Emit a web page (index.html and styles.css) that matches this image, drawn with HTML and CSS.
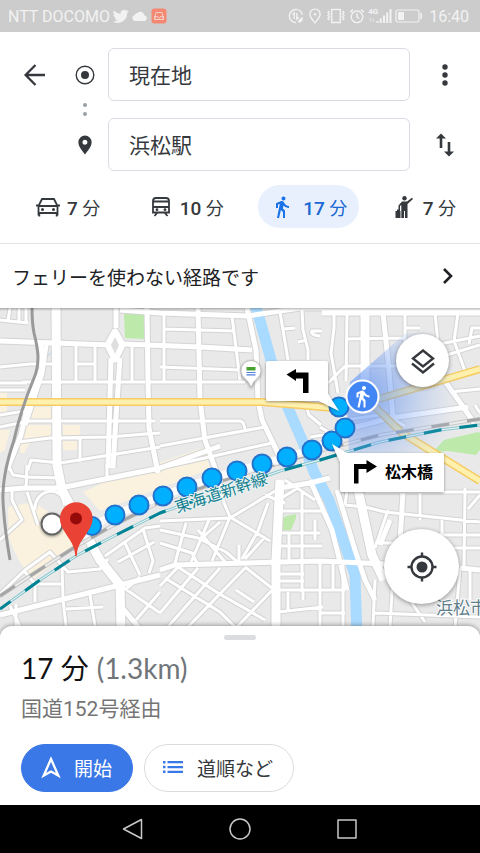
FILE: index.html
```html
<!DOCTYPE html>
<html lang="ja">
<head>
<meta charset="utf-8">
<meta name="viewport" content="width=device-width, initial-scale=1">
<title>浜松駅までの経路</title>
<link rel="stylesheet" href="styles.css">
</head>
<body>
<div class="app">
  <div class="status">
    <span class="carrier">NTT DOCOMO</span>
    <svg width="16" height="16" viewBox="0 0 24 24" fill="currentColor"><path d="M23.6 4.9c-.9.4-1.800.6-2.800.8 1-.6 1.800-1.600 2.100-2.700-.9.6-2 1-3.100 1.200a4.900 4.900 0 0 0-8.300 4.500C7.400 8.500 3.800 6.500 1.400 3.600a4.900 4.900 0 0 0 1.500 6.500c-.8 0-1.600-.2-2.200-.6v.1c0 2.400 1.700 4.400 3.900 4.800-.7.2-1.500.2-2.200.1.600 2 2.400 3.400 4.600 3.400A9.900 9.900 0 0 1-.3 20 13.900 13.900 0 0 0 21.200 7.600c1-.7 1.800-1.600 2.400-2.700z"/></svg>
    <svg width="16" height="16" viewBox="0 0 16 16" fill="currentColor"><path d="M3.500 13a3 3 0 0 1-.8-5.900 2.300 2.300 0 0 1 2.300-1.800 4 4 0 0 1 7.200 1.900A3 3 0 0 1 12.800 13z"/></svg>
    <svg width="16" height="16" viewBox="0 0 16 16"><rect x=".5" y=".5" width="15" height="15" rx="3" fill="#f58872"/><path d="M4 8.500 5 4.500h6l1 4v3H4zM4 8.500h2.500q0 1.500 1.500 1.500t1.500-1.500H12M3.500 8v3.500h9V8" fill="none" stroke="#f3cfc7"/></svg>
    <span class="spacer"></span>
    <svg width="16" height="16" viewBox="0 0 16 16" fill="none" stroke="currentColor" stroke-width="1.400"><path d="M14.500 7A6.600 6.600 0 1 0 8 14.600M6.200 11V5L4.600 6.600M8.800 5v6l1.800-1.800"/><path d="M10 14.500q0-4 5-5.500 0 6-5 5.500z" fill="currentColor" stroke="none"/></svg>
    <svg width="16" height="16" viewBox="0 0 16 16" fill="none" stroke="currentColor" stroke-width="1.400"><path d="M8 14.800C5.500 11.500 2.900 9 2.900 6.200a5.100 5.100 0 0 1 10.200 0C13.100 9 10.500 11.500 8 14.800z"/><circle cx="8" cy="6.300" r="1.200" fill="currentColor" stroke="none"/></svg>
    <svg width="20" height="16" viewBox="0 0 20 16" fill="none" stroke="currentColor" stroke-width="1.400"><rect x="5.700" y="1.500" width="8.600" height="13"/><path d="M3.500 3 2 4.500 3.500 6 2 7.500 3.500 9 2 10.500 3.500 12M16.500 3 18 4.500 16.500 6 18 7.500 16.500 9 18 10.500 16.500 12"/></svg>
    <svg width="16" height="16" viewBox="0 0 16 16" fill="none" stroke="currentColor" stroke-width="1.400"><circle cx="8" cy="8.800" r="5.800"/><path d="M8 5.500V9l2.300 1.800M1 4.200 4 1.600M15 4.200 12 1.600"/></svg>
    <span class="signal"><span class="gen">4G</span>
      <svg width="24" height="16" viewBox="0 0 24 16" fill="currentColor"><path d="M8.500 13h2v2h-2zM11.800 10.500h2V15h-2zM15 7.500h2V15h-2zM18.200 4.500h2V15h-2zM21.500 1h2v14h-2z"/><path d="M2.500 14v-4L1 11.500M5 10v4l1.500-1.500" fill="none" stroke="currentColor" opacity=".5"/></svg></span>
    <svg width="28" height="16" viewBox="0 0 28 16"><rect x="1" y="2" width="23" height="12" rx="1.500" fill="none" stroke="currentColor" stroke-width="1.200"/><path d="M3 4h6v8H3zM25.500 5H27v6h-1.500z" fill="currentColor"/></svg>
    <span class="clock">16:40</span>
  </div>

  <form class="route">
    <button class="icon back" type="button" aria-label="戻る"><svg width="24" height="24" viewBox="0 0 24 24" fill="none" stroke="currentColor" stroke-width="2.300"><path d="M22 12H3M12.500 2 2.600 12l9.900 10"/></svg></button>
    <label class="mark" for="from" aria-label="出発地"><svg width="20" height="20" viewBox="0 0 20 20"><circle cx="10" cy="10" r="8.800" fill="none" stroke="currentColor" stroke-width="1.400"/><circle cx="10" cy="10" r="4" fill="currentColor"/></svg></label>
    <input id="from" class="place" type="text" value="現在地">
    <button class="icon" type="button" aria-label="メニュー"><svg width="24" height="24" viewBox="0 0 24 24" fill="currentColor"><circle cx="12" cy="4" r="2.700"/><circle cx="12" cy="12" r="2.700"/><circle cx="12" cy="20" r="2.700"/></svg></button>
    <span class="dots"><i></i><i></i></span>
    <label class="mark row3" for="to" aria-label="目的地"><svg width="20" height="20" viewBox="0 0 20 20"><path fill="currentColor" fill-rule="evenodd" d="M10 19.500C7 15.500 3.400 11.600 3.400 7.200a6.600 6.600 0 0 1 13.200 0C16.600 11.600 13 15.500 10 19.500zM10 4.700a2.500 2.500 0 1 0 0 5 2.500 2.500 0 0 0 0-5z"/></svg></label>
    <input id="to" class="place" type="text" value="浜松駅">
    <button class="icon" type="button" aria-label="入れ替え"><svg width="24" height="26" viewBox="0 0 24 26" fill="currentColor"><path d="M3 6.500 8 1.500l5 5H9.300V16H6.700V6.500zM11 19.500h3.700V10h2.600v9.500H21l-5 5z"/></svg></button>
  </form>

  <nav class="modes">
    <button type="button" class="mode"><svg width="24" height="24" viewBox="0 0 24 24" fill="none" stroke="currentColor" stroke-width="1.800"><path d="M2.500 20.500V11L6 4h12l3.500 7v9.500M2.500 18h19M2.500 11h19M0 10.500h3M21 10.500h3M3.300 18v3.500M20.700 18v3.500"/><circle cx="6.500" cy="14.500" r="1.500" fill="currentColor" stroke="none"/><circle cx="17.500" cy="14.500" r="1.500" fill="currentColor" stroke="none"/></svg><span><b>7</b> 分</span></button>
    <button type="button" class="mode"><svg width="20" height="24" viewBox="0 0 20 24" fill="none" stroke="currentColor" stroke-width="1.800"><path d="M2 17.500V6q0-3 3-3h10q3 0 3 3v11.500zM2 6.500h16M2 12h16M6.500 17.500 3.500 21M13.500 17.500l3 3.500"/><circle cx="6" cy="14.700" r="1.400" fill="currentColor" stroke="none"/><circle cx="14" cy="14.700" r="1.400" fill="currentColor" stroke="none"/></svg><span class="wide"><b>10</b> 分</span></button>
    <button type="button" class="mode active" aria-pressed="true"><svg width="24" height="24" viewBox="0 0 24 24"><use href="#walk"/></svg><span class="wide"><b>17</b> 分</span></button>
    <button type="button" class="mode"><svg width="20" height="24" viewBox="0 0 20 24" fill="currentColor"><circle cx="10.500" cy="3.200" r="2.200"/><path d="M8 6.500h5l5-3.800 1 1.400-5.500 5V23H11v-7h-1v7H7.300V10L6 11v6H4.500v-6.500zM1.500 16H3v-1.500h2.500V16H6.500v7h-5z"/></svg><span class="wide"><b>7</b> 分</span></button>
  </nav>

  <button type="button" class="notice"><span>フェリーを使わない経路です</span><svg width="16" height="18" viewBox="0 0 16 18" fill="none" stroke="currentColor" stroke-width="2.600"><path d="m4 2 7 7-7 7"/></svg></button>

  <main class="map">
    <svg class="canvas" viewBox="0 308 480 326" preserveAspectRatio="xMidYMid slice" role="img" aria-label="現在地から浜松駅までの地図">
      <defs>
        <path id="walk" d="M13.500 5.500c1.100 0 2-.9 2-2s-.9-2-2-2-2 .9-2 2 .9 2 2 2zM9.800 8.900 7 23h2.100l1.800-8 2.100 2v6h2v-7.500l-2.100-2 .6-3C14.800 12 16.800 13 19 13v-2c-1.900 0-3.500-1-4.300-2.400l-1-1.600c-.4-.6-1-1-1.700-1-.3 0-.5.1-.8.1L6 8.300V13h2V9.600l1.800-.7"/>
        <radialGradient id="beam" gradientUnits="userSpaceOnUse" cx="362" cy="396" r="98"><stop offset="0" stop-color="#4f86f2" stop-opacity=".7"/><stop offset=".45" stop-color="#6d9bf2" stop-opacity=".4"/><stop offset="1" stop-color="#a9c5fb" stop-opacity="0"/></radialGradient>
        <filter id="soft" x="-30%" y="-30%" width="160%" height="170%"><feDropShadow dx="0" dy="1" stdDeviation="1.500" flood-opacity=".4"/></filter>
        <path id="lanes" d="M10 308 8 321M19 308v13M26 308v14M0 320l28 3M0 367l30-3h23M42 345v20M76 346v36M95 346v36M76 364h19M132 347v35M0 383h27M0 390h25M0 415l25-4M0 427l30-6h125M18 442l32-4 60-1 35-3 15-1M28 470l3-10 29 3 50-8 50-8M80 438v24M22 382h123M164 314v68M150 382h95M164 329l70 2M160 367l80 3M232 316l8 64M160 421h80q4 0 5 9M160 446l105-19M160 468l112-25M280 312l8 48M302 310l1 20 5 20v10M322 331h-10q-2 4 8 5M298 342l9-2M283 329l12-1M306 405l3 10 12 10M310 437l20-3
          M334 313v15l-3 25 7 40M347 313l-1 68M405 313v32M435 313l3 30M458 313l-4 28 11 30M345 339l60-1M345 366h55M405 328h15M345 366l-17 17M430 346l50-10M480 328h-8l-3 16M440 357l40-12M450 392l30-3M320 427l20 12M345 420l40-6 20 12
          M8 465l5 10 14 2 35 1M27 465l-1 24M107 465v14M0 540l22-20-10-20v-10M27 492l11 33M35 510c-1-22 29-26 29-5M0 594l25-24 25-18 18 20 32-3 8-10M25 572l10 12v18M35 584h28M62 566l1 34 3 26M10 606l10 20M16 604v22M66 609l37-2M90 595l5 31M105 556l40-28 15-2M125 543l15 32M143 529l10 32-4 12M118 562l36-20M120 585l40 28M136 620l24-28M140 577l-14 12
          M160 521l70-3 45-27M230 517l40 24M222 498l8 19M160 530l38 8 28 14 14 12M186 523l-11 40M209 520l-18 42M160 543l32 10 5 10M198 530l27 32M230 517l-18 44M268 503l-10 28-16 28M239 545v17M203 537l17-15M265 537l-20 22M160 586l18-19M165 578l55 34 20 20M160 613l38-45M178 567l40 26 47 27M220 568l-55 62M245 568l-60 62M245 567l32 25M277 585l-43 45M236 590l18 12M265 495l20 8
          M278 511h45M280 533h40M280 546h42M302 490v102M289 534v26M280 574h24M280 581h24M280 590h42M288 592v21M303 590v10M278 500l20-12M285 480l30 20M278 612l45-5M315 520v20M320 590h25M320 613h25M333 563v27M343 563v65M320 560v68
          M345 505l20 2 20 5 95 10M365 492h115M420 492v28M465 488l-1 80M442 520v15M388 510l-13 38M375 543h20M375 580l-2 46M393 576l-3 50M375 613l105 4M410 600l15 22M440 535h40M405 535h75M480 495l-12 14M460 568l-5 60M470 570v30M450 548h30M350 470l-5 35M475 405l5 8"/>
        <path id="streets" d="M38 342l4 25-13 33-8 35-14 35M46 345l-4 28-17 52M0 341l110 4M122 344l78 3 52 3M116 308v20M111 358l-3 110M120 358l-4 60-3 50M147 308l1 72 1 48 9 45M198 308l2 92 5 40 10 28 8 32M120 310l40 3 88 3 52-8h180M322 313h158M247 308l9 42 2 50 4 20 12 25 9 20M383 313l5 47 5 58M325 435l65-17 78-11M444 380l20 28 10 15M0 490l25-2h35l20-4 80-16 60-22M0 615l120-30 40-10M160 570l15-5 145-4 65 3M310 480l22 50 15 60M337 490l18 60 10 30 10 20M403 492l-3 50M460 568l20 2M120 605l25 30M390 520l-10 25M280 488l30-5 20-5"/>
        <path id="avenues" d="M56 308l1 157 5 25 38 70 20 25 1 45M365 313v70M280 480l-4 80v74M356 480l16 75 12 25"/>
        <path id="yellow" d="M0 402h262l60 5 20 2M372 401l108-32M370 402l32 31 78 48"/>
        <path id="diamond" d="M115 332l-7 13 7 14 7-14z"/>
        <path id="jr" d="M0 596l30-20 45-29 35-20 50-25 70-24 100-30 50-13 100-16"/>
        <path id="shinkansen" d="M0 609l40-29 36-24 34-18 50-25 60-21 60-21 40-11 60-18 60-12 40-5"/>
      </defs>
      <rect y="300" width="480" height="340" fill="#e9e9e9"/>
      <g fill="#faf2df"><path d="M30 407h21v12H26zM23 425h28v14H20l2-5zM63 425h17v10H63zM63 441h14v9H63zM0 392h7v20H0zM0 430h10l-5 20-5 3zM20 443h10l-6 10h-4z"/><path d="M83 492 110 480 205 447l5 22-110 42zM8 507l25-5 32 20 15 22-48 36-14-21-9-20z"/></g>
      <g fill="#bdeaab"><path d="M124 314h20v25l-19-1zM279 521l7-5 10-2v4l-5 12h-12zM433 452l11-12 34-8 2 1v17l-4 5-28-4z"/></g>
      <path d="M43 360l8-7" stroke="#a9d5f7"/>
      <g fill="none" stroke="#d4d4d4" stroke-linejoin="round"><use href="#lanes" stroke-width="5"/><use href="#streets" stroke-width="7"/><use href="#avenues" stroke-width="11"/><use href="#diamond" stroke-width="9"/></g>
      <path d="M254 300l7 24 10 36 17 48 14 32 12 32 15 28 16 45 10 30 2 65" fill="none" stroke="#a9daff" stroke-width="11"/>
      <g fill="none" stroke="#fff" stroke-linejoin="round"><use href="#lanes" stroke-width="3"/><use href="#streets" stroke-width="5"/><use href="#avenues" stroke-width="9"/><use href="#diamond" stroke-width="7"/></g>
      <path d="M115 337l-4 8 4 9 4-9z" fill="#dedede"/>
      <g fill="none"><use href="#yellow" stroke="#f6cc62" stroke-width="8"/><use href="#yellow" stroke="#fff0ae" stroke-width="5"/></g>
      <path d="M32 308q0 15 2 25 4 16 4 24 0 12-4 21-14 34-20 62-12 36-11 60 1 25 7 60" fill="none" stroke="#999" stroke-width="3"/>
      <g fill="none" stroke-linejoin="round"><use href="#jr" stroke="#c9c9c9" stroke-width="4"/><use href="#jr" stroke="#ececec" stroke-width="2"/><use href="#jr" stroke="#a6a6a6" stroke-width="3" stroke-dasharray="18 18"/>
      <use href="#shinkansen" stroke="#8cc6cd" stroke-width="3"/><use href="#shinkansen" stroke="#f1fafb" stroke-width="1"/><use href="#shinkansen" stroke="#008394" stroke-width="3" stroke-dasharray="18 18" stroke-dashoffset="5"/></g>
      <path d="M350 382 406 333 480 330v150H350l-3-70z" fill="url(#beam)"/>
      <path d="M92 526 115 515 139 505 163 496 187 487 212 478 237 471 262 464 287 457 312 450 332 441 345 428 339 407" fill="none" stroke="#fff" stroke-width="8" opacity=".85"/>
      <g fill="#00b0ff" stroke="#2472cb" stroke-width="2"><circle cx="92" cy="526" r="9"/><circle cx="115" cy="515" r="9.500"/><circle cx="139" cy="505" r="9.500"/><circle cx="163" cy="496" r="9.500"/><circle cx="187" cy="487" r="9.500"/><circle cx="212" cy="478" r="9.500"/><circle cx="237" cy="471" r="9.500"/><circle cx="262" cy="464" r="9.500"/><circle cx="287" cy="457" r="9.500"/><circle cx="312" cy="450" r="9.500"/><circle cx="332" cy="441" r="9.500"/><circle cx="345" cy="428" r="9.500"/><circle cx="339" cy="407" r="9.500"/></g>
      <text class="line-name" transform="rotate(-18 177 513)" x="177" y="513">東海道新幹線</text>
      <text class="city-name" x="436" y="614">浜松市</text>
      <g filter="url(#soft)"><path d="M251 387.500q-1.500-5-6-9a10 10 0 1 1 12 0q-4.500 4-6 9z" fill="#fff" stroke="#aaa" stroke-width=".7"/></g><path d="M246.500 367h9v3.500h-9z" fill="#46a332"/><path d="M246.500 372.500h9M246.500 374.800h9" stroke="#4d7de0" stroke-width="1.200"/>
      <circle cx="52" cy="524" r="10.500" fill="#fff" stroke="#666" stroke-width="2" filter="url(#soft)"/>
      <path d="M76 556.500q-1 0-1-3c-1-14-15-22-15-35a16.300 16.300 0 0 1 32.600 0c0 13-14.600 21-15.600 35q0 3-1 3z" fill="#ea4335"/><circle cx="76" cy="518.500" r="6" fill="#970a0a"/>
      <g filter="url(#soft)" fill="#fff"><path d="M268 361h58q2 0 2 2v31l11 17-20-10h-51q-2 0-2-2v-36q0-2 2-2z"/><path d="m332 444 15 9h95q2 0 2 2v35q0 2-2 2H342q-2 0-2-2v-28z"/></g>
      <path d="M286.500 374.500 296 369v3.500h12.500V393H303v-14.500h-7v2.500z"/>
      <path d="M354 483.500V464h12.500v-4l10.500 6.500-10.500 6.500v-4h-8v14.500z"/>
      <text class="turn-name" x="385" y="478">松木橋</text>
      <circle cx="362.500" cy="396.500" r="16" fill="#4285f4" stroke="#fff" stroke-width="2"/><use href="#walk" transform="translate(350.500 384.500)" fill="#fff"/>
    </svg>
    <button type="button" class="fab layers" aria-label="レイヤ"><svg width="28" height="28" viewBox="0 0 28 28" fill="none" stroke="currentColor" stroke-width="2.400"><path d="M14 3.500 24 11.500 14 19.500 4 11.500zM3 16.500l11 9 11-9"/></svg></button>
    <button type="button" class="fab locate" aria-label="現在地を表示"><svg width="30" height="30" viewBox="0 0 30 30" fill="none" stroke="currentColor" stroke-width="2.400"><circle cx="15" cy="15" r="10.500"/><circle cx="15" cy="15" r="5.500" fill="currentColor" stroke="none"/><path d="M15 .5V5M15 25v4.500M.5 15H5M25 15h4.500"/></svg></button>
  </main>

  <section class="sheet">
    <div class="grip"></div>
    <h1>17 分<span class="distance">(1.3km)</span></h1>
    <p>国道152号経由</p>
    <div class="actions">
      <button type="button" class="action start"><svg width="20" height="24" viewBox="0 0 20 24" fill="none" stroke="currentColor" stroke-width="2.300"><path d="M10 4 2.700 20.500l7.300-4 7.300 4z"/></svg>開始</button>
      <button type="button" class="action"><svg class="blue" width="22" height="16" viewBox="0 0 22 16" fill="currentColor"><path d="M1 2h2.500v2.500H1zM1 6.800h2.500v2.500H1zM1 11.500h2.500V14H1zM5.500 2H21v2.300H5.500zM5.500 6.900H21v2.300H5.500zM5.500 11.700H21V14H5.500z"/></svg>道順など</button>
    </div>
  </section>

  <footer class="system">
    <button type="button" aria-label="戻る"><svg width="24" height="24" viewBox="0 0 24 24"><path d="M20.500 2.500v19L2.500 12z"/></svg></button>
    <button type="button" aria-label="ホーム"><svg width="24" height="24" viewBox="0 0 24 24"><circle cx="12" cy="12" r="10"/></svg></button>
    <button type="button" aria-label="履歴"><svg width="24" height="24" viewBox="0 0 24 24"><path d="M3 3h18v18H3z"/></svg></button>
  </footer>
</div>
</body>
</html>
```
FILE: styles.css
```css
* { box-sizing: border-box; }
body {
  margin: 0;
  background: #fff;
  color: #35393d;
  font-family: Roboto, "Noto Sans CJK JP", sans-serif;
}
button {
  margin: 0;
  padding: 0;
  border: 0;
  background: none;
  color: inherit;
  font: inherit;
}
svg { display: block; flex: none; }
.app { display: flex; flex-direction: column; min-height: 100vh; }

.status {
  display: flex;
  align-items: center;
  gap: 3px;
  height: 32px;
  padding: 0 11px 0 8px;
  background: #ccc;
  color: #f2f2f2;
  font-size: 16px;
}
.spacer { flex: 1; }
.signal { position: relative; }
.gen { position: absolute; left: 0; top: 0; font-size: 8px; line-height: 8px; font-weight: 700; }
.clock { padding-left: 3px; }

.route {
  display: grid;
  grid-template-columns: 62px 30px 1fr 54px;
  grid-template-rows: 53px 17px 53px;
  column-gap: 8px;
  align-items: center;
  padding: 16px 8px 0 0;
}
.icon { display: grid; place-items: center; height: 100%; }
.back { padding-left: 8px; }
.mark { display: grid; place-items: center; }
.row3 { grid-column: 2; }
.dots {
  grid-column: 2;
  grid-row: 2;
  display: flex;
  flex-direction: column;
  align-items: center;
  gap: 5px;
}
.dots i { width: 4px; height: 4px; border-radius: 50%; background: #9aa0a6; }
.place {
  width: 100%;
  min-width: 0;
  height: 100%;
  padding: 0 20px 2px;
  border: 1px solid #dadce3;
  border-radius: 6px;
  background: #fff;
  color: #35393d;
  font: 21px Roboto, "Noto Sans CJK JP", sans-serif;
}

.modes {
  display: flex;
  justify-content: space-between;
  padding: 14px 8px 15px 20px;
  border-bottom: 1px solid #e4e4e4;
}
.mode {
  display: flex;
  align-items: center;
  gap: 7px;
  height: 43px;
  padding: 0 16px;
  border-radius: 22px;
  font-size: 18px;
  white-space: nowrap;
}
.mode b { font-size: 19px; font-weight: 500; }
.wide { padding-left: 2px; }
.active { background: #e8f0fe; color: #1967d2; padding: 0 12px; }
.active svg { fill: #1a73e8; }

.notice {
  display: flex;
  align-items: center;
  justify-content: space-between;
  height: 64px;
  padding: 0 24px 0 12px;
  color: #202124;
  font-size: 19px;
  text-align: left;
}

.map {
  position: relative;
  flex: 1 0 326px;
  overflow: hidden;
}
.map::before {
  content: "";
  position: absolute;
  inset: 0 0 auto;
  height: 3px;
  background: linear-gradient(#0004, #0000);
}
.canvas { position: absolute; inset: 0; width: 100%; height: 100%; z-index: -1; }
.line-name { fill: #167f8f; stroke: #e9f4f5; stroke-width: 2px; paint-order: stroke; font-size: 16px; }
.city-name { fill: #607d8b; stroke: #fff; stroke-width: 2px; paint-order: stroke; font-size: 17px; }
.turn-name { fill: #000; font-size: 16px; font-weight: 700; }
.fab {
  position: absolute;
  display: grid;
  place-items: center;
  border-radius: 50%;
  background: #fff;
  color: #35393d;
  box-shadow: 0 1px 4px #0006;
}
.layers { top: 26px; right: 31px; width: 53px; height: 53px; }
.locate { right: 21px; bottom: 30px; width: 75px; height: 75px; }

.sheet {
  position: relative;
  margin-top: -8px;
  padding: 9px 21px 13px;
  border-radius: 12px 12px 0 0;
  background: #fff;
  box-shadow: 0 -1px 4px #0005;
}
.grip { width: 32px; height: 5px; margin: 0 auto; border-radius: 3px; background: #dadce0; }
h1 {
  display: flex;
  gap: 8px;
  margin: 8px 0 0;
  color: #111;
  font: 400 28px/40px Lato, "Noto Sans CJK JP", sans-serif;
}
.distance { color: #70757a; }
p { margin: 6px 0 0; color: #757575; font-size: 21px; line-height: 30px; }
.actions { display: flex; gap: 11px; margin-top: 20px; }
.action {
  display: flex;
  align-items: center;
  gap: 13px;
  height: 48px;
  padding: 0 20px 2px 17px;
  border: 1px solid #dadce0;
  border-radius: 24px;
  font-size: 19px;
}
.start { border-color: #3b78e7; background: #3b78e7; color: #fff; padding-left: 19px; }
.blue { color: #3b78e7; }

.system {
  display: flex;
  justify-content: center;
  gap: 83px;
  padding: 12px 0;
  background: #000;
}
.system svg { fill: none; stroke: #c8c8c8; stroke-width: 1.5px; stroke-linejoin: round; }
```
